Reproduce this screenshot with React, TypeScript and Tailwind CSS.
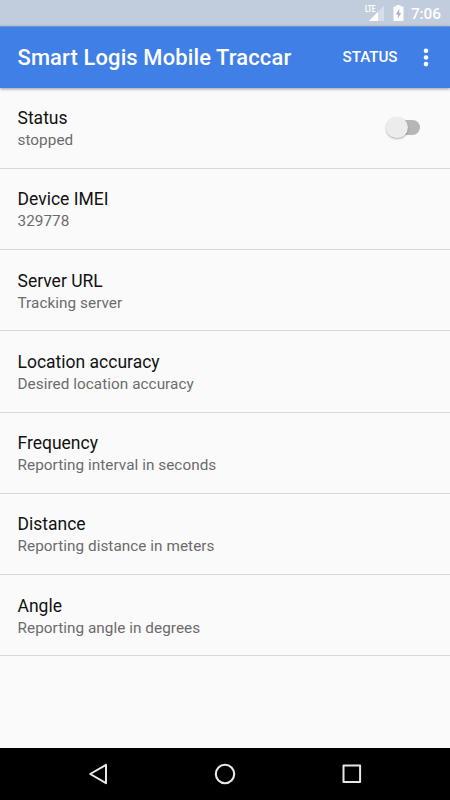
import { useState } from 'react';

interface Preference {
  title: string;
  summary: string;
}

const PREFERENCES: Preference[] = [
  { title: 'Device IMEI', summary: '329778' },
  { title: 'Server URL', summary: 'Tracking server' },
  { title: 'Location accuracy', summary: 'Desired location accuracy' },
  { title: 'Frequency', summary: 'Reporting interval in seconds' },
  { title: 'Distance', summary: 'Reporting distance in meters' },
  { title: 'Angle', summary: 'Reporting angle in degrees' },
];

function StatusBar() {
  return (
    <div className="flex h-[26px] shrink-0 items-start justify-end bg-[#c1ccdd] pr-[9px] text-white">
      {/* Signal strength with network type */}
      <svg className="mt-1 h-[18px] w-5" viewBox="0 0 20 18">
        <path d="M19 1.5V17H4z" fill="#fff" fillOpacity="0.35" />
        <path d="M13 7.7V17H4z" fill="#fff" />
        <text
          x="0"
          y="8"
          fontFamily="Roboto, sans-serif"
          fontSize="9.5"
          fontWeight="700"
          textLength="10.5"
          lengthAdjust="spacingAndGlyphs"
          fill="#fff"
        >
          LTE
        </text>
      </svg>
      <svg className="mt-[5px] ml-2 h-4 w-[11px]" viewBox="0 0 11 16">
        <path
          d="M3.3 0h4.2v1.6h2.2q.8 0 .8.8v12.8q0 .8-.8.8H1.3q-.8 0-.8-.8V2.4q0-.8.8-.8h2z"
          fill="#fff"
        />
        <path d="M6.3 3.8 2.8 9.4h2.1v4.2L8.2 8H6.3z" fill="#a9b5c7" />
      </svg>
      <span className="mt-[5px] ml-[6.5px] text-[15.3px] leading-[18px] font-medium">7:06</span>
    </div>
  );
}

function Toolbar() {
  return (
    <header className="relative flex h-[61.5px] shrink-0 items-center border-t border-[#6c95da] bg-[#4080e6] pl-[17.5px] text-white shadow-[0_1px_3px_rgba(0,0,0,0.4)]">
      <h1 className="mt-px text-[21.9px] leading-7 font-medium tracking-[0.15px] whitespace-nowrap">
        Smart Logis Mobile Traccar
      </h1>
      <button className="ml-auto text-[15.2px] leading-5 font-medium tracking-[-0.05px]">STATUS</button>
      <button className="mr-[19px] ml-[23.5px]" aria-label="More options">
        <svg className="h-[19px] w-[10px]" viewBox="0 0 10 19" fill="currentColor">
          <circle cx="5" cy="2.8" r="2.3" />
          <circle cx="5" cy="9.5" r="2.3" />
          <circle cx="5" cy="16.1" r="2.3" />
        </svg>
      </button>
    </header>
  );
}

function PreferenceText({ title, summary }: Preference) {
  return (
    <div className="mt-[4px]">
      <div className="text-[17.5px] leading-[22px] text-[#121212]">{title}</div>
      <div className="text-[15.3px] leading-[23px] tracking-[0.05px] text-[#6c6c6c]">{summary}</div>
    </div>
  );
}

function Switch({ on, onToggle }: { on: boolean; onToggle: () => void }) {
  return (
    <button role="switch" aria-checked={on} aria-label="Status" onClick={onToggle} className="flex h-6 w-[35px] items-center">
      <span
        className={`size-[21.5px] shrink-0 rounded-full bg-[#ececec] shadow-[0_1px_2px_rgba(0,0,0,0.3)] z-10 ${
          on ? 'translate-x-3.5' : ''
        }`}
      />
      <span className="-ml-[17px] h-[15.5px] w-[29.5px] shrink-0 rounded-full bg-[#b6b6b6]" />
    </button>
  );
}

function NavigationBar() {
  return (
    <nav className="flex h-[52.5px] shrink-0 items-center justify-between bg-black px-[86px] text-[#e8e8e8]">
      <svg className="size-6" viewBox="0 0 24 24" fill="none" stroke="currentColor" strokeWidth="2" strokeLinejoin="round">
        <path d="M20 2.8v18.4L4.2 12z" />
      </svg>
      <svg className="size-6" viewBox="0 0 24 24" fill="none" stroke="currentColor" strokeWidth="2.1">
        <circle cx="12" cy="12" r="9.2" />
      </svg>
      <svg className="size-6" viewBox="0 0 24 24" fill="none" stroke="currentColor" strokeWidth="2" strokeLinejoin="round">
        <rect x="3.5" y="3.5" width="16.6" height="16.6" />
      </svg>
    </nav>
  );
}

export default function App() {
  const [running, setRunning] = useState(false);

  return (
    <div className="flex h-[800px] w-[450px] flex-col overflow-hidden bg-[#fafafa] font-[Roboto,sans-serif]">
      <StatusBar />
      <Toolbar />

      <main className="flex-1">
        <div className="flex h-[81.25px] items-center justify-between border-b border-[#d8d8d8] pr-[29px] pl-[17.5px]">
          <PreferenceText title="Status" summary={running ? 'running' : 'stopped'} />
          <Switch on={running} onToggle={() => setRunning(!running)} />
        </div>
        {PREFERENCES.map((pref) => (
          <div key={pref.title} className="flex h-[81.25px] items-center border-b border-[#d8d8d8] pl-[17.5px]">
            <PreferenceText {...pref} />
          </div>
        ))}
      </main>

      <NavigationBar />
    </div>
  );
}
